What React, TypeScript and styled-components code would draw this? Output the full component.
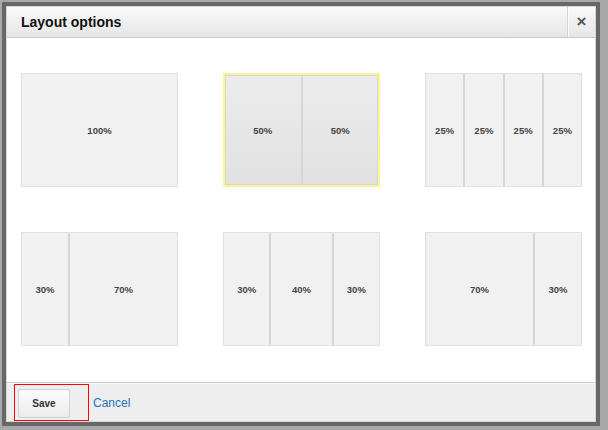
import React from "react";
import styled, { createGlobalStyle } from "styled-components";

const Global = createGlobalStyle`
  html, body { margin: 0; padding: 0; }
  body {
    background: #a9a9a9;
    font-family: "Liberation Sans", Arial, sans-serif;
    width: 608px;
    height: 430px;
    overflow: hidden;
  }
`;

const Stage = styled.div`
  width: 608px;
  height: 430px;
  padding: 2px 0 0 2px;
  box-sizing: border-box;
`;

const Dialog = styled.div`
  width: 598px;
  height: 424px;
  box-sizing: border-box;
  border: 4px solid #676767;
  display: flex;
  flex-direction: column;
  background: #fff;
`;

const Inner = styled.div`
  flex: 1;
  border: 1px solid #d6d6d6;
  display: flex;
  flex-direction: column;
`;

const Header = styled.div`
  height: 30px;
  display: flex;
  align-items: stretch;
  background: linear-gradient(#f9f9f9, #e6e6e6);
  border-bottom: 1px solid #c8c8c8;
`;

const Title = styled.div`
  flex: 1;
  display: flex;
  align-items: center;
  padding-left: 14px;
  font-size: 14px;
  font-weight: bold;
  color: #111;
`;

const Close = styled.div`
  width: 27px;
  border-left: 1px solid #d4d4d4;
  box-shadow: inset 1px 0 0 #fafafa;
  display: flex;
  align-items: center;
  justify-content: center;
  font-size: 17px;
  font-weight: bold;
  color: #555;
`;

const Body = styled.div`
  height: 344px;
  box-sizing: border-box;
  padding: 35px 13px 35px 14px;
  display: grid;
  grid-template-columns: repeat(3, 157px);
  grid-template-rows: 114px 114px;
  justify-content: space-between;
  row-gap: 45px;
`;

const Card = styled.div<{ $selected?: boolean }>`
  display: flex;
  box-sizing: border-box;
  border: ${(p) => (p.$selected ? "2px solid #fdf68f" : "1px solid #e0e0e0")};
  background: ${(p) =>
    p.$selected ? "linear-gradient(#ececec, #e1e1e1)" : "#f1f1f1"};
  box-shadow: ${(p) => (p.$selected ? "inset 0 0 0 1px #d6d6d6" : "none")};
`;

const Col = styled.div<{ $selected?: boolean }>`
  display: flex;
  align-items: center;
  justify-content: center;
  font-size: 9.5px;
  font-weight: bold;
  color: #444;
  & + & {
    border-left: 2px solid ${(p) => (p.$selected ? "#d6d6d6" : "#e6e6e6")};
  }
`;

const Footer = styled.div`
  flex: 1;
  border-top: 1px solid #c9c9c9;
  box-shadow: inset 0 1px 0 #fafafa;
  background: #eeeeee;
  display: flex;
  align-items: flex-start;
  padding: 1px 0 0 7px;
  gap: 4px;
`;

const Highlight = styled.div`
  border: 1px solid red;
  padding: 4px 18px 2px 3px;
`;

const Button = styled.button`
  width: 52px;
  height: 29px;
  box-sizing: border-box;
  border: 1px solid #d2d2d2;
  border-radius: 2px;
  background: linear-gradient(#fbfbfb, #ececec);
  font-family: "Liberation Sans", Arial, sans-serif;
  font-size: 10px;
  font-weight: bold;
  color: #333;
  padding: 0;
`;

const Link = styled.a`
  margin-top: 12px;
  font-size: 12px;
  color: #2a6fb8;
  text-decoration: none;
`;

const layouts: { cols: number[]; selected?: boolean }[] = [
  { cols: [100] },
  { cols: [50, 50], selected: true },
  { cols: [25, 25, 25, 25] },
  { cols: [30, 70] },
  { cols: [30, 40, 30] },
  { cols: [70, 30] },
];

export default function App() {
  return (
    <>
      <Global />
      <Stage>
        <Dialog>
          <Inner>
            <Header>
              <Title>Layout options</Title>
              <Close>×</Close>
            </Header>
            <Body>
              {layouts.map((l, i) => (
                <Card key={i} $selected={l.selected}>
                  {l.cols.map((c, j) => (
                    <Col key={j} $selected={l.selected} style={{ flex: c }}>
                      {c}%
                    </Col>
                  ))}
                </Card>
              ))}
            </Body>
            <Footer>
              <Highlight>
                <Button>Save</Button>
              </Highlight>
              <Link href="#">Cancel</Link>
            </Footer>
          </Inner>
        </Dialog>
      </Stage>
    </>
  );
}
